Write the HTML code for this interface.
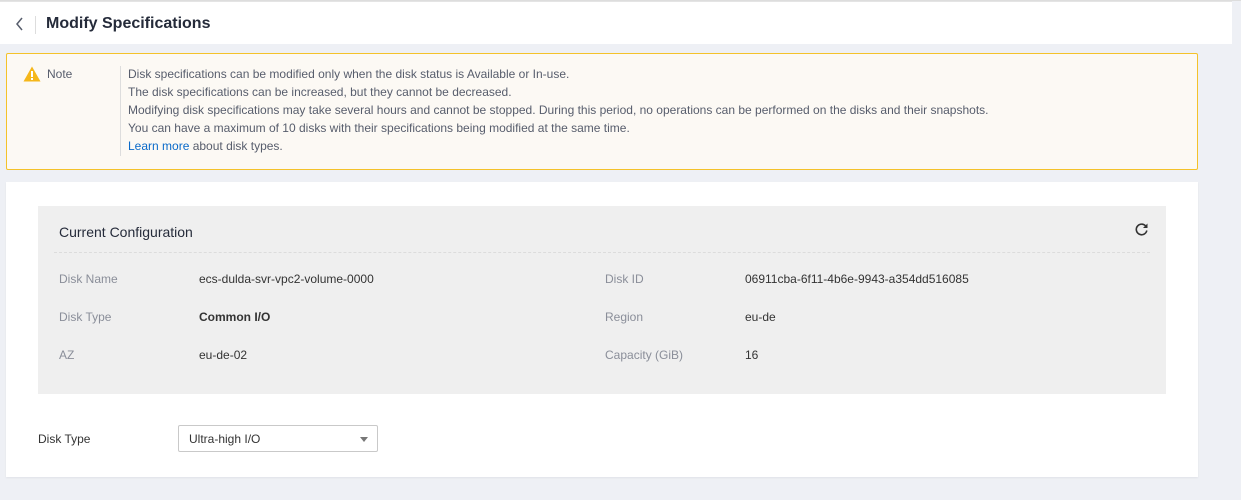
<!DOCTYPE html>
<html><head><style>
*{margin:0;padding:0;box-sizing:border-box}
body{width:1241px;height:500px;background:#eef0f5;font-family:"Liberation Sans",Arial,sans-serif;font-size:12px;color:#252b3a;position:relative;overflow:hidden}
.hdr{position:absolute;left:0;top:1px;width:1232px;height:43px;background:#fff;border-top:1px solid #e4e4e4}
.topline{position:absolute;left:0;top:0;width:1241px;height:1px;background:#ddd}
.back{position:absolute;left:14px;top:15px}
.sep{position:absolute;left:35px;top:14px;width:1px;height:18px;background:#ddd}
.title{position:absolute;left:46px;top:13px;font-size:16px;font-weight:bold;color:#252b3a}
.note{position:absolute;left:6px;top:53px;width:1192px;height:117px;background:#fcf9f4;border:1px solid #f4c22a;border-radius:2px}
.note .lbl{position:absolute;left:40px;top:13px;color:#575d6c}
.note .vl{position:absolute;left:113px;top:12px;width:1px;height:90px;background:#ddd}
.note .txt{position:absolute;left:121px;top:11px;line-height:18px;color:#575d6c}
.note a{color:#0a6ac9;text-decoration:none}
.card{position:absolute;left:6px;top:182px;width:1192px;height:295px;background:#fff;box-shadow:0 1px 2px rgba(0,0,0,.06)}
.panel{position:absolute;left:32px;top:24px;width:1128px;height:188px;background:#efefef}
.ph{position:absolute;left:21px;top:18px;font-size:14px;color:#252b3a}
.dash{position:absolute;left:16px;top:46px;width:1096px;border-top:1px dashed #dcdcdc}
.k{position:absolute;color:#8a8e99}
.v{position:absolute;color:#333}
.sel{position:absolute;left:172px;top:243px;width:200px;height:27px;border:1px solid #c9c9c9;border-radius:2px;background:#fff;padding:6px 10px;color:#333}
.arr{position:absolute;right:9px;top:11px;width:0;height:0;border-left:4px solid transparent;border-right:4px solid transparent;border-top:5px solid #777}
</style></head><body>
<div class="topline"></div>
<div class="hdr">
<svg class="back" width="12" height="14" viewBox="0 0 12 14"><path d="M8 1 L3 7 L8 13" stroke="#575d6c" stroke-width="1.5" fill="none"/></svg>
<div class="sep"></div>
<div class="title">Modify Specifications</div>
</div>
<div class="note">
<svg style="position:absolute;left:16px;top:12px" width="18" height="16" viewBox="0 0 18 16"><path d="M9 0.5 L17.5 15.5 L0.5 15.5 Z" fill="#f5b71a"/><rect x="8" y="5" width="2" height="6" fill="#fff"/><rect x="8" y="12" width="2" height="2" fill="#fff"/></svg>
<div class="lbl">Note</div>
<div class="vl"></div>
<div class="txt">Disk specifications can be modified only when the disk status is Available or In-use.<br>The disk specifications can be increased, but they cannot be decreased.<br>Modifying disk specifications may take several hours and cannot be stopped. During this period, no operations can be performed on the disks and their snapshots.<br>You can have a maximum of 10 disks with their specifications being modified at the same time.<br><a>Learn more</a> about disk types.</div>
</div>
<div class="card">
<div class="panel">
<div class="ph">Current Configuration</div>
<svg style="position:absolute;left:1096px;top:16px" width="15" height="15" viewBox="0 0 15 15"><path d="M12.2 4.8 A5.3 5.3 0 1 0 12.8 8.5" stroke="#333" stroke-width="1.6" fill="none"/><path d="M13.5 1.5 L13.5 6 L9 6 Z" fill="#333"/></svg>
<div class="dash"></div>
<div class="k" style="left:21px;top:66px">Disk Name</div><div class="v" style="left:161px;top:66px">ecs-dulda-svr-vpc2-volume-0000</div>
<div class="k" style="left:21px;top:104px">Disk Type</div><div class="v" style="left:161px;top:104px;font-weight:bold">Common I/O</div>
<div class="k" style="left:21px;top:142px">AZ</div><div class="v" style="left:161px;top:142px">eu-de-02</div>
<div class="k" style="left:567px;top:66px">Disk ID</div><div class="v" style="left:707px;top:66px">06911cba-6f11-4b6e-9943-a354dd516085</div>
<div class="k" style="left:567px;top:104px">Region</div><div class="v" style="left:707px;top:104px">eu-de</div>
<div class="k" style="left:567px;top:142px">Capacity (GiB)</div><div class="v" style="left:707px;top:142px">16</div>
</div>
<div class="v" style="left:32px;top:250px">Disk Type</div>
<div class="sel">Ultra-high I/O<div class="arr"></div></div>
</div>
</body></html>
